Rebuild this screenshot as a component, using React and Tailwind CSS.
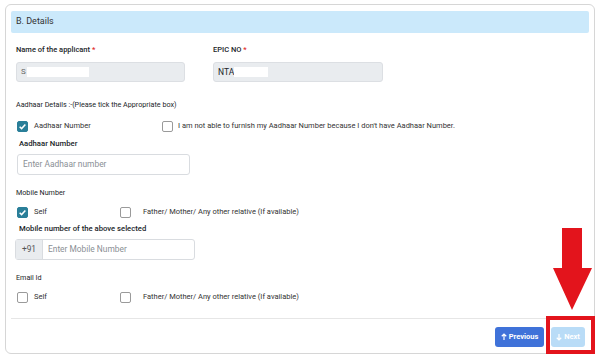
import React from "react";

const Check = ({ checked }) => (
  <span
    className={`inline-flex items-center justify-center w-[11px] h-[11px] rounded-[2px] shrink-0 ${
      checked ? "bg-[#2a7f99] border border-[#2a7f99]" : "bg-white border border-[#9a9a9a]"
    }`}
  >
    {checked && (
      <svg viewBox="0 0 12 12" className="w-[9px] h-[9px]">
        <path d="M2.2 6.3 L4.8 8.8 L9.8 3.2" fill="none" stroke="#fff" strokeWidth="2" />
      </svg>
    )}
  </span>
);

const Arrow = ({ down }) => (
  <svg viewBox="0 0 8 10" className={`w-[6px] h-[8px] ${down ? "rotate-180" : ""}`}>
    <path d="M4 1 V9 M1 4 L4 1 L7 4" fill="none" stroke="currentColor" strokeWidth="1.6" />
  </svg>
);

const App = () => {
  return (
    <div
      className="relative w-[600px] h-[360px] bg-white overflow-hidden text-[#212529]"
      style={{ fontFamily: "Roboto, 'Liberation Sans', sans-serif" }}
    >
      <div className="ml-[5px] mt-[4px] w-[590px] h-[350px] border border-[#d6d6d6] rounded-[6px] px-[5px] pt-[6px]">
        <div className="h-[22px] bg-[#cbe9fb] rounded-[2px] flex items-center px-[5px] text-[9px] text-[#333]">
          B. Details
        </div>

        <div className="px-[5px]">
          {/* name / epic */}
          <div className="flex mt-[11px]">
            <div className="w-[197px]">
              <div className="h-[12px] text-[7.5px] font-medium leading-[12px]">
                Name of the applicant <span className="text-[#e02424]">*</span>
              </div>
              <div className="mt-[6px] w-[169px] h-[20px] bg-[#e9ecef] border border-[#dcdfe3] rounded-[3px] flex items-center px-[4px] text-[8px]">
                <span className="text-[#666]">S</span>
                <span className="ml-[1px] w-[62px] h-[10px] bg-white"></span>
              </div>
            </div>
            <div>
              <div className="h-[12px] text-[7.5px] font-medium leading-[12px]">
                EPIC NO <span className="text-[#e02424]">*</span>
              </div>
              <div className="mt-[6px] w-[170px] h-[20px] bg-[#e9ecef] border border-[#dcdfe3] rounded-[3px] flex items-center px-[4px] text-[8.5px]">
                <span>NTA</span>
                <span className="w-[34px] h-[10px] bg-white"></span>
              </div>
            </div>
          </div>

          {/* aadhaar */}
          <div className="mt-[17px] h-[12px] leading-[12px] text-[7.2px]">
            Aadhaar Details :-(Please tick the Appropriate box)
          </div>
          <div className="flex items-center mt-[9px] h-[12px] text-[7.5px] text-[#333]">
            <div className="flex items-center w-[146px] pl-[1px]">
              <Check checked />
              <span className="ml-[6px]">Aadhaar Number</span>
            </div>
            <Check />
            <span className="ml-[5px]">
              I am not able to furnish my Aadhaar Number because I don't have Aadhaar Number.
            </span>
          </div>
          <div className="mt-[6px] ml-[3px] h-[12px] leading-[12px] text-[7.7px] font-medium">
            Aadhaar Number
          </div>
          <div className="mt-[4px] ml-[1px] w-[173px] h-[21px] border border-[#d9dce0] rounded-[3px] flex items-center px-[5px] text-[8.4px] text-[#8a8f95]">
            Enter Aadhaar number
          </div>

          {/* mobile */}
          <div className="mt-[12px] h-[12px] leading-[12px] text-[7.2px]">Mobile Number</div>
          <div className="flex items-center mt-[7px] h-[12px] text-[7.5px] text-[#333]">
            <div className="flex items-center w-[104px] pl-[1px]">
              <Check checked />
              <span className="ml-[6px]">Self</span>
            </div>
            <Check />
            <span className="ml-[12px]">Father/ Mother/ Any other relative (If available)</span>
          </div>
          <div className="mt-[5px] ml-[3px] h-[12px] leading-[12px] text-[7.7px] font-medium">
            Mobile number of the above selected
          </div>
          <div className="mt-[4px] -ml-[1px] w-[180px] h-[21px] border border-[#d9dce0] rounded-[3px] flex text-[8.4px]">
            <div className="w-[27px] bg-[#e9ecef] border-r border-[#d9dce0] flex items-center justify-center text-[#555]">
              +91
            </div>
            <div className="flex items-center px-[5px] text-[#8a8f95]">Enter Mobile Number</div>
          </div>

          {/* email */}
          <div className="mt-[12px] h-[12px] leading-[12px] text-[7.2px]">Email Id</div>
          <div className="flex items-center mt-[7px] h-[12px] text-[7.5px] text-[#333]">
            <div className="flex items-center w-[104px] pl-[1px]">
              <Check />
              <span className="ml-[6px]">Self</span>
            </div>
            <Check />
            <span className="ml-[12px]">Father/ Mother/ Any other relative (If available)</span>
          </div>
        </div>

        <div className="mt-[15px] border-t border-[#e6e6e6]"></div>

        <div className="flex justify-end gap-[7px] mt-[8px] pr-[4px]">
          <button className="h-[20px] w-[49px] bg-[#3f72d9] rounded-[3px] text-white text-[7.5px] font-bold flex items-center justify-center gap-[2px]">
            <Arrow />
            Previous
          </button>
          <button className="h-[20px] w-[34px] bg-[#b9dcf7] rounded-[3px] text-white text-[7.5px] font-bold flex items-center justify-center gap-[2px]">
            <Arrow down />
            Next
          </button>
        </div>
      </div>

      {/* red highlight overlay */}
      <div className="absolute left-[546px] top-[316px] w-[49px] h-[38px] border-[4px] border-[#e3141c]"></div>
      <svg className="absolute left-[550px] top-[226px]" width="46" height="86" viewBox="0 0 46 86">
        <path d="M12 2 H32 V42 H42 L22 84 L3 42 H12 Z" fill="#e3141c" />
      </svg>
    </div>
  );
};

export default App;
